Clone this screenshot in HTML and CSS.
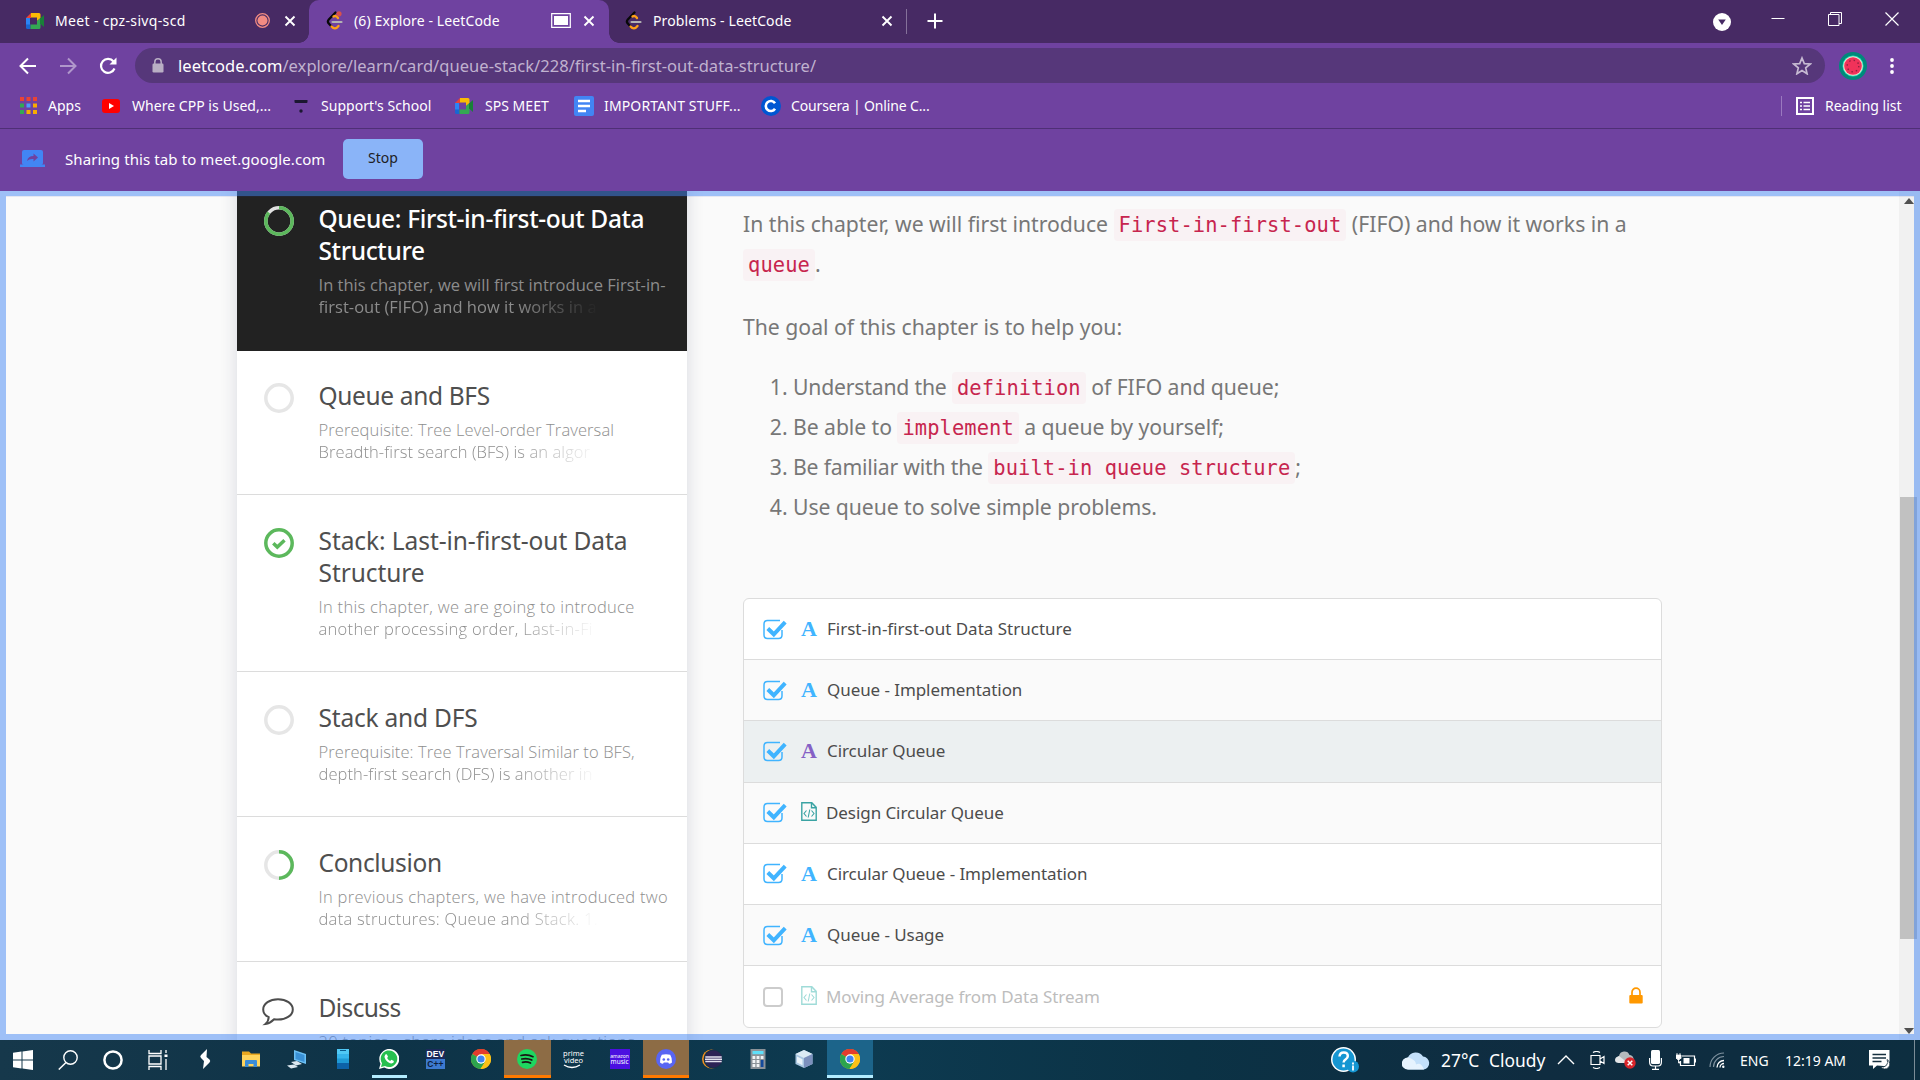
FILE: index.html
```html
<!DOCTYPE html>
<html lang="en">
<head>
<meta charset="utf-8">
<title>Explore - LeetCode</title>
<link rel="stylesheet" href="styles.css">
</head>
<body>
<svg class="defs" width="0" height="0">
  <symbol id="meet" viewBox="0 0 18 16"><path d="M0 5h4v7H0z" fill="#2b84f5"/><path d="M0 5 5 0v5z" fill="#ea4335"/><path d="M5 0h8q1.500 0 1.500 1.500V5l-3.500 3V4.500H5z" fill="#fbbc04"/><path d="M0 11.500h4.500V16H1.500Q0 16 0 14.500z" fill="#1967d2"/><path d="M4.500 11.500H11V8l3.500-3v9.500q0 1.500-1.500 1.500H4.500z" fill="#34a853"/><path d="M14 5.500 18 2v12l-4-3.500z" fill="#188038"/></symbol>
  <symbol id="leet" viewBox="0 0 17 20"><path d="M9.500 1.500 2.800 8.500Q1 10.500 2.800 12.500L5.500 15.500" fill="none" stroke="#080808" stroke-width="2.300" stroke-linecap="round"/><path d="M7.500 5.500q2.500-1.500 4.500 1.500M5.500 15.500q3.500 4 7-0.500" fill="none" stroke="#ffa116" stroke-width="2.300" stroke-linecap="round"/><path d="M6.500 11H15.500" stroke="#b3b3b3" stroke-width="2.200" stroke-linecap="round"/></symbol>
  <symbol id="close" viewBox="0 0 12 12"><path d="M1.500 1.500l9 9M10.500 1.500l-9 9" stroke="#fff" stroke-width="1.900"/></symbol>
  <symbol id="chrome" viewBox="0 0 20 20"><circle cx="10" cy="10" r="10" fill="#fbc116"/><path d="M10 10 1.300 5A10 10 0 0 1 18.700 5z" fill="#e33b2e"/><path d="M10 10 1.300 5A10 10 0 0 0 9.500 20L14.300 12.500z" fill="#2da44e"/><path d="M18.700 5H10v5l4.300 2.500L9.500 20A10 10 0 0 0 18.700 5z" fill="#fbc116"/><circle cx="10" cy="10" r="4.700" fill="#fff"/><circle cx="10" cy="10" r="3.600" fill="#3f83f0"/></symbol>
  <symbol id="check" viewBox="0 0 24 21"><path d="M17 1.500H4.500Q1 1.500 1 5v11q0 3.500 3.500 3.500h11q3.500 0 3.500-3.500v-5" fill="none" stroke="#40b4ff" stroke-width="1.500"/><path d="M4.800 9.500l6 5.800L22.200 3.200" fill="none" stroke="#40b4ff" stroke-width="4"/></symbol>
  <symbol id="code" viewBox="0 0 16 19"><path d="M.8.8h10l4.400 4.600v12.800H.8zM10.500 1v4.700H15" fill="none" stroke="currentColor" stroke-width="1.400"/><path d="M5.500 8.500 3 11.500l2.500 3M10.500 8.500l2.500 3-2.500 3M8.800 7.500l-1.600 8" fill="none" stroke="currentColor" stroke-width="1.100"/></symbol>
</svg>

<header class="browser">
  <div class="tabs">
    <div class="tab tab-first"><svg class="i18"><use href="#meet"/></svg><span class="tab-title">Meet - cpz-sivq-scd</span>
      <svg class="rec" viewBox="0 0 15 15"><circle cx="7.500" cy="7.500" r="6.800" fill="none" stroke="#f28b82" stroke-width="1.300"/><circle cx="7.500" cy="7.500" r="5" fill="#f28b82"/></svg><svg class="x"><use href="#close"/></svg></div>
    <div class="tab tab-active"><svg class="leet" viewBox="0 0 17 20"><use href="#leet"/><circle cx="13" cy="2.800" r="2.600" fill="#d8504c"/></svg><span class="tab-title">(6) Explore - LeetCode</span>
      <svg class="cast" viewBox="0 0 20 15"><path d="M.7.700h18.600v13.600H.7z" fill="none" stroke="#fff" stroke-width="1.200"/><path d="M3 3h14v9H3z" fill="#fff"/></svg><svg class="x"><use href="#close"/></svg></div>
    <div class="tab tab-last"><svg class="leet"><use href="#leet"/></svg><span class="tab-title">Problems - LeetCode</span><svg class="x"><use href="#close"/></svg></div>
    <i class="tab-sep"></i>
    <svg class="plus" viewBox="0 0 16 16"><path d="M8 .5v15M.5 8h15" stroke="#fff" stroke-width="2"/></svg>
    <svg class="window-menu" viewBox="0 0 18 18"><circle cx="9" cy="9" r="9" fill="#fff"/><path d="M5.200 6.500h7.600L9 12z" fill="#472a64"/></svg>
    <div class="window-buttons">
      <svg viewBox="0 0 14 14"><path d="M.5 6.500h13" stroke="#fff" stroke-width="1"/></svg>
      <svg viewBox="0 0 14 14"><path d="M.5 2.500h10.500v11H.5zM2.500 2.500v-2h11v11h-2.500" fill="none" stroke="#fff"/></svg>
      <svg viewBox="0 0 14 14"><path d="M.5.500l13 13M13.500.500l-13 13" stroke="#fff" stroke-width="1.200"/></svg>
    </div>
  </div>

  <div class="toolbar">
    <svg viewBox="0 0 18 18"><path d="M17 9H2M9 1.500 1.500 9 9 16.500" fill="none" stroke="#fff" stroke-width="2"/></svg>
    <svg class="dim" viewBox="0 0 18 18"><path d="M1 9h15M9 1.500 16.500 9 9 16.500" fill="none" stroke="#fff" stroke-width="2"/></svg>
    <svg viewBox="0 0 18 18"><path d="M15.500 11.500A7 7 0 1 1 14.500 4.500" fill="none" stroke="#fff" stroke-width="2.200"/><path d="M17.500.5v7h-7z" fill="#fff"/></svg>
    <div class="omnibox">
      <svg class="padlock" viewBox="0 0 12 15"><path d="M2.800 6V4a3.200 3.200 0 0 1 6.400 0v2" fill="none" stroke="#b9afc4" stroke-width="1.500"/><rect x=".5" y="5.500" width="11" height="9" rx="1.200" fill="#b9afc4"/></svg>
      <span class="url"><b>leetcode.com</b>/explore/learn/card/queue-stack/228/first-in-first-out-data-structure/</span>
      <svg class="star" viewBox="0 0 20 19"><path d="M10 2l2.300 5.600 6 .4-4.600 3.900 1.400 5.900L10 14.600 4.900 17.800l1.400-5.900L1.700 8l6-.4z" fill="none" stroke="#c6bad2" stroke-width="1.700"/></svg>
    </div>
    <svg class="avatar" viewBox="0 0 28 28"><circle cx="14" cy="14" r="14" fill="#00897b"/><circle cx="14" cy="14" r="10.500" fill="#1de9b6"/><circle cx="14" cy="14" r="9.800" fill="#f3d9cf"/><circle cx="14" cy="14" r="8.800" fill="#f0325a"/><circle cx="14" cy="14" r="5.800" fill="none" stroke="#8e1f3f" stroke-width="1.400" stroke-dasharray="1.400 3.150"/></svg>
    <svg class="dots" viewBox="0 0 4 18"><circle cx="2" cy="3" r="1.900" fill="#fff"/><circle cx="2" cy="9" r="1.900" fill="#fff"/><circle cx="2" cy="15" r="1.900" fill="#fff"/></svg>
  </div>

  <nav class="bookmarks">
    <a class="apps"><svg viewBox="0 0 17 17"><g fill="#ea4335"><path d="M0 0h4v4H0zM6.500 0h4v4h-4zM13 0h4v4h-4z"/></g><path d="M0 6.500h4v4H0z" fill="#34a853"/><path d="M6.500 6.500h4v4h-4z" fill="#4c9aff"/><path d="M13 6.500h4v4h-4z" fill="#f9ab00"/><path d="M0 13h4v4H0z" fill="#34a853"/><path d="M6.500 13h4v4h-4zM13 13h4v4h-4z" fill="#f9ab00"/></svg><span>Apps</span></a>
    <a><svg viewBox="0 0 20 20"><rect x="0" y="3" width="18" height="14" rx="3" fill="#f00"/><path d="M7 7l5 3-5 3z" fill="#fff"/></svg><span>Where CPP is Used,...</span></a>
    <a><svg viewBox="0 0 20 20"><path d="M3.500 4h13v2q0 1-1 1h-11q-1 0-1-1z" fill="#1b1731"/><circle cx="10" cy="15" r="1.700" fill="#1b1731"/></svg><span>Support's School</span></a>
    <a><svg viewBox="0 0 20 20"><use href="#meet" width="18" height="16" y="2"/></svg><span>SPS MEET</span></a>
    <a class="docs"><svg viewBox="0 0 20 20"><rect width="20" height="20" rx="2" fill="#4285f4"/><path d="M4 5h12M4 10h12M4 15h8" stroke="#fff" stroke-width="2.400"/></svg><span>IMPORTANT STUFF...</span></a>
    <a class="coursera"><svg viewBox="0 0 20 20"><circle cx="10" cy="10" r="10" fill="#0056d2"/><path d="M14 7.300a5 5 0 1 0 0 5.400" fill="none" stroke="#fff" stroke-width="2.600"/></svg><span>Coursera | Online C...</span></a>
    <a class="reading"><svg viewBox="0 0 18 18"><path d="M1 1h16v16H1z" fill="none" stroke="#fff" stroke-width="2"/><path d="M4 5.500h2M4 9h2M4 12.500h2M7.500 5.500H14M7.500 9H14M7.500 12.500H14" stroke="#fff" stroke-width="1.500"/></svg><span>Reading list</span></a>
  </nav>

  <div class="sharing">
    <svg viewBox="0 0 25 17"><rect x="2" y="0" width="21" height="15" rx="2" fill="#4285f4"/><path d="M0 14.500h25V17H0z" fill="#4285f4"/><path d="M7 11q1-5 6.500-5V3.500L18 7.500l-4.500 4V9Q9.500 8.500 7 11z" fill="#6f42a0"/></svg>
    <span class="sharing-text">Sharing this tab to meet.google.com</span>
    <button>Stop</button>
  </div>
</header>

<main class="viewport">
  <aside class="chapters">
    <section class="chapter current">
      <svg class="ring" viewBox="0 0 30 30"><circle cx="15" cy="15" r="13.200" stroke="#e2e2e2"/><circle cx="15" cy="15" r="13.200" stroke="#5cb85c" pathLength="100" stroke-dasharray="86 100" transform="rotate(-90 15 15)"/></svg>
      <div><h2>Queue: First-in-first-out Data<br>Structure</h2><p>In this chapter, we will first introduce First-in-<br><span class="fade">first-out (FIFO) and how it works in a</span></p></div>
    </section>
    <section class="chapter">
      <svg class="ring" viewBox="0 0 30 30"><circle cx="15" cy="15" r="13.200" stroke="#e6e6e6"/></svg>
      <div><h2>Queue and BFS</h2><p>Prerequisite: Tree Level-order Traversal<br><span class="fade">Breadth-first search (BFS) is an algor</span></p></div>
    </section>
    <section class="chapter">
      <svg class="ring" viewBox="0 0 30 30"><circle cx="15" cy="15" r="13.200" stroke="#5cb85c"/><path d="M9.300 15.300l4 3.800 7.200-6.800" stroke="#5cb85c"/></svg>
      <div><h2>Stack: Last-in-first-out Data<br>Structure</h2><p>In this chapter, we are going to introduce<br><span class="fade">another processing order, Last-in-Fi</span></p></div>
    </section>
    <section class="chapter">
      <svg class="ring" viewBox="0 0 30 30"><circle cx="15" cy="15" r="13.200" stroke="#e6e6e6"/></svg>
      <div><h2>Stack and DFS</h2><p>Prerequisite: Tree Traversal Similar to BFS,<br><span class="fade">depth-first search (DFS) is another in</span></p></div>
    </section>
    <section class="chapter">
      <svg class="ring" viewBox="0 0 30 30"><circle cx="15" cy="15" r="13.200" stroke="#e6e6e6"/><path d="M15 1.800a13.200 13.200 0 0 1 0 26.400" stroke="#5cb85c"/></svg>
      <div><h2>Conclusion</h2><p>In previous chapters, we have introduced two<br><span class="fade">data structures: Queue and Stack. 1.</span></p></div>
    </section>
    <section class="chapter">
      <svg class="bubble" viewBox="0 0 32 28"><path d="M16 1.200c8.300 0 14.800 4.400 14.800 10.200S24.300 21.600 16 21.600q-2 0-3.900-.3Q8 25.500 3.500 26q3-2.500 3.200-6.800Q1.200 16.500 1.200 11.400C1.200 5.600 7.700 1.200 16 1.200z" fill="none" stroke="#4d4d4d" stroke-width="2"/></svg>
      <div><h2>Discuss</h2><p>20 topics - share ideas and ask questions</p></div>
    </section>
  </aside>

  <article class="content">
    <p>In this chapter, we will first introduce <code>First-in-first-out</code> (FIFO) and how it works in a<br><code>queue</code>.</p>
    <p class="goal">The goal of this chapter is to help you:</p>
    <ol>
      <li><span class="tight">Understand the</span> <code>definition</code> of FIFO and queue;</li>
      <li>Be able to <code>implement</code> a queue by yourself;</li>
      <li><span class="tight">Be familiar with the</span> <code>built-in queue structure</code>;</li>
      <li>Use queue to solve simple problems.</li>
    </ol>
    <div class="lessons">
      <div class="lesson"><svg class="tick"><use href="#check"/></svg><b>A</b><span>First-in-first-out Data Structure</span></div>
      <div class="lesson"><svg class="tick"><use href="#check"/></svg><b>A</b><span>Queue - Implementation</span></div>
      <div class="lesson selected"><svg class="tick"><use href="#check"/></svg><b>A</b><span>Circular Queue</span></div>
      <div class="lesson"><svg class="tick"><use href="#check"/></svg><svg class="code"><use href="#code"/></svg><span>Design Circular Queue</span></div>
      <div class="lesson"><svg class="tick"><use href="#check"/></svg><b>A</b><span>Circular Queue - Implementation</span></div>
      <div class="lesson"><svg class="tick"><use href="#check"/></svg><b>A</b><span>Queue - Usage</span></div>
      <div class="lesson locked"><i class="box"></i><svg class="code"><use href="#code"/></svg><span>Moving Average from Data Stream</span>
        <svg class="lock" viewBox="0 0 14 17"><path d="M3 8V5.200a4 4 0 0 1 8 0V8" fill="none" stroke="#ff9800" stroke-width="1.700"/><rect x=".3" y="8" width="13.400" height="8.600" rx="1" fill="#ff9800"/></svg></div>
    </div>
  </article>

  <div class="scrollbar"><svg viewBox="0 0 10 6"><path d="M0 6h10L5 0z" fill="#505050"/></svg><i class="thumb"></i><svg class="down" viewBox="0 0 10 6"><path d="M0 0h10L5 6z" fill="#505050"/></svg></div>
  <div class="share-frame"></div>
</main>

<footer class="taskbar">
  <div class="launchers">
    <span class="sys"><svg viewBox="0 0 20 20"><path d="M0 2.800l8.500-1.200v8H0zM9.500 1.400 20 0v9.600H9.500zM0 10.500h8.500v8L0 17.300zM9.500 10.500H20V20L9.500 18.600z" fill="#fff"/></svg></span>
    <span class="sys"><svg viewBox="0 0 20 20"><circle cx="12.500" cy="7.500" r="6.700" fill="none" stroke="#fff" stroke-width="1.400"/><path d="M8 12.500.8 19.500" stroke="#fff" stroke-width="1.500"/></svg></span>
    <span class="sys"><svg viewBox="0 0 20 20"><circle cx="10" cy="10" r="8.600" fill="none" stroke="#fff" stroke-width="2.500"/></svg></span>
    <span class="sys"><svg viewBox="0 0 20 20"><path d="M1 0v3.500h12V0M1 20v-3.500h12V20M1 6h12v8H1zM18 0v3M18 9v11" fill="none" stroke="#fff" stroke-width="1.300"/><path d="M16.500 4.500h3V7h-3z" fill="#fff"/></svg></span>
    <span class="app first"><svg viewBox="0 0 20 20"><path d="M12 0 6 6q-1.500 1.500 0 3l3 3L8 20l6.500-6.500q1.500-1.500 0-3L11.500 8z" fill="#fff"/></svg></span>
    <span class="app"><svg viewBox="0 0 20 20"><path d="M1 2.500h7l2 2h9V17H1z" fill="#e9a820"/><path d="M1 6h18v11.500H1z" fill="#ffd45c"/><path d="M4 18v-6q0-1 1-1h10q1 0 1 1v6h-3.500v-3h-5v3z" fill="#3b8dd8"/></svg></span>
    <span class="app"><svg viewBox="0 0 20 20"><path d="M7 1l12 4v10L7 11z" fill="#6cc1f5"/><path d="M8.500 3l9 3v7l-9-3z" fill="#3a91d6"/><path d="M4 13l6-1 5 3-6 1.500zM0 16.500l7-1 4 2.500-7 1.500z" fill="#dce8f0"/></svg></span>
    <span class="app"><svg viewBox="0 0 20 20"><path d="M4 0h12v20H4z" fill="#1f9ad6"/><path d="M4 0h12v5H4z" fill="#50c8f5"/><path d="M4 5h12v4.500H4z" fill="#35b4ec"/><path d="M4 14h12v6H4z" fill="#0d62a8"/><path d="M7 1.500h6" stroke="#0a5c8f"/></svg></span>
    <span class="app running"><svg viewBox="0 0 20 20"><path d="M0 20l1.500-5.300A10 10 0 1 1 5.300 18.600z" fill="#fff"/><path d="M2 18l1-3.800A8.300 8.300 0 1 1 6 17z" fill="#27c04f"/><path d="M6.300 5.500l1.500-.3 1.200 2.500-.9 1.300q1 2 3 3l1.300-1.200 2.500 1.200q.2 2-2.400 2.500C8.500 14 5.500 10 5.500 7.500z" fill="#fff"/></svg></span>
    <span class="app"><span class="dev"><em>DEV</em><em>C++</em></span></span>
    <span class="app"><svg><use href="#chrome"/></svg></span>
    <span class="app alert"><svg viewBox="0 0 20 20"><circle cx="10" cy="10" r="10" fill="#1ed760"/><path d="M4 6.500q6.500-1.500 12 1.200M4.800 10q5.500-1.200 10 1M5.500 13.300q4.500-1 8 .8" fill="none" stroke="#191414" stroke-width="1.700" stroke-linecap="round"/></svg></span>
    <span class="app"><span class="prime">prime<br>video<svg viewBox="0 0 18 5"><path d="M1 1q8 5 16 0" fill="none" stroke="#fff" stroke-width="1.300"/></svg></span></span>
    <span class="app"><span class="amazon">amazon<br><em>music</em></span></span>
    <span class="app alert"><svg viewBox="0 0 20 20"><circle cx="10" cy="10" r="10" fill="#5865f2"/><path d="M5.800 5.800Q10 4.500 14.200 5.800 16.300 9 16 13.500q-1.500 1.200-3 1.300l-.8-1.200H7.800L7 14.800q-1.500-.1-3-1.300Q3.700 9 5.800 5.800z" fill="#fff"/><circle cx="7.800" cy="10.500" r="1.300" fill="#5865f2"/><circle cx="12.200" cy="10.500" r="1.300" fill="#5865f2"/></svg></span>
    <span class="app"><svg viewBox="0 0 20 20"><circle cx="9.500" cy="10" r="9.500" fill="#f7941e"/><circle cx="11" cy="10" r="9.500" fill="#173048"/><circle cx="11.500" cy="10" r="8.500" fill="#2c2255"/><path d="M3.300 8h16.400M3 10.300h17M3.300 12.600h16.400" stroke="#e4e2ef" stroke-width="1.500"/></svg></span>
    <span class="app"><svg viewBox="0 0 20 20"><path d="M2.500 0h15v20h-15z" fill="#8b9298"/><path d="M4.500 2h11v3.200h-11z" fill="#5fe0fa"/><path d="M4.500 7h2.800v3H4.500zM8.600 7h2.800v3H8.600zM12.700 7h2.800v3h-2.800zM4.500 11h2.800v3H4.500zM8.600 11h2.800v3H8.600zM4.500 15h2.800v3H4.500zM8.600 15h2.800v3H8.600z" fill="#f2f4f5"/><path d="M12.700 11h2.800v7h-2.800z" fill="#134a9c"/></svg></span>
    <span class="app"><svg viewBox="0 0 20 20"><path d="M10 1l8.500 4v10L10 19l-8.500-4V5z" fill="#a9c7e2"/><path d="M10 1l8.500 4L10 9 1.500 5z" fill="#dcebf5"/><path d="M10 9l8.500-4v10L10 19z" fill="#7c90bd"/><path d="M3 7.500l5.500 2.700v6L3 13.500z" fill="#e8f2f9"/></svg></span>
    <span class="app active"><svg><use href="#chrome"/></svg></span>
  </div>
  <div class="tray">
    <svg class="help" viewBox="0 0 29 26"><circle cx="13.500" cy="12.500" r="12.500" fill="#fff"/><circle cx="13.500" cy="12.500" r="11" fill="#1696d2"/><path d="M9.500 9.500q.3-4 4.300-4t4 3.500q0 2-2 3.200T13.600 15.500M13.600 17.500v2.700" fill="none" stroke="#fff" stroke-width="2.500"/><circle cx="23" cy="19.500" r="6" fill="#1696d2"/><path d="M23 15.500v2M23 18.500v5" stroke="#fff" stroke-width="1.800"/></svg>
    <svg class="cloud" viewBox="0 0 28 20"><path d="M6.500 19.500a6 6 0 0 1-.6-11.900A8.500 8.500 0 0 1 21 6.600a6.500 6.500 0 0 1 .8 12.900z" fill="#c3e0fa"/><path d="M6.500 19.500a6 6 0 1 1 2.500-11q5 2 5 6 5-3 8 5z" fill="#e6f3fe"/></svg>
    <span class="big">27°C</span><span class="big">Cloudy</span>
    <svg class="up" viewBox="0 0 18 10"><path d="M1 9l8-8 8 8" fill="none" stroke="#fff" stroke-width="1.400"/></svg>
    <svg class="cam" viewBox="0 0 15 18"><path d="M1 4.500h9v9H1zM10 8l4-2.500v7L10 10M3 1.500q3.500-2 7 0M3 16.500q3.500 2 7 0" fill="none" stroke="#fff" stroke-width="1.200"/></svg>
    <svg class="drive" viewBox="0 0 21 18"><path d="M4 12a4 4 0 0 1 0-7A5.500 5.500 0 0 1 14.500 4 4.500 4.500 0 0 1 17 12z" fill="#b5babd"/><path d="M0 9q0-3 4-4l9 7H4Q0 12 0 9z" fill="#e4e6e8"/><circle cx="15" cy="12" r="5.700" fill="#d9252b"/><path d="M12.700 9.700l4.600 4.600M17.300 9.700l-4.600 4.600" stroke="#fff" stroke-width="1.500"/></svg>
    <svg class="mic" viewBox="0 0 13 20"><rect x="2" y="0" width="9" height="14" rx="1.500" fill="#fff"/><path d="M.6 8v4q0 4 3.400 4h5q3.400 0 3.400-4V8M6.500 16v3M3 19.300h7" fill="none" stroke="#fff" stroke-width="1.200"/></svg>
    <svg class="battery" viewBox="0 0 20 14"><path d="M6 3h12.500v9.500H4.500V8M19.500 5.500v4" fill="none" stroke="#fff" stroke-width="1.200"/><path d="M7.500 5h6v5.500h-6z" fill="#fff"/><path d="M0 2h5v3.500H4L3 7H2L1 5.500H0zM1 0v2M4 0v2M2.500 7v3h2" fill="#fff" stroke="#fff" stroke-width=".8"/></svg>
    <svg class="wifi" viewBox="0 0 16 16"><path d="M1 15A14 14 0 0 1 15 1M4.500 15A10.500 10.500 0 0 1 15 4.500" fill="none" stroke="#8093a0" stroke-width="1.200"/><path d="M8 15.500A7 7 0 0 1 15 8.500M11 15.500A4 4 0 0 1 15 11.500" fill="none" stroke="#fff" stroke-width="1.300"/><circle cx="14.300" cy="14.800" r="1.200" fill="#fff"/></svg>
    <span>ENG</span><span>12:19 AM</span>
    <svg class="note" viewBox="0 0 21 20"><path d="M0 0h20.500v12q-3 5-6 4L8 15.500 4 19v-3.500H0z" fill="#fff"/><path d="M3.500 4.500h13.500M3.500 8h13.500M3.500 11.500h9" stroke="#17303f" stroke-width="1.300"/><path d="M18 9.500a5 5 0 0 1-6.500 7A5 5 0 1 0 18 9.500z" fill="#fff" stroke="#17303f" stroke-width=".8"/></svg>
    <i class="desktop-edge"></i>
  </div>
</footer>
</body>
</html>
```
FILE: styles.css
```css
* { box-sizing: border-box; }
body { margin: 0; width: 1920px; height: 1080px; overflow: hidden; display: flex; flex-direction: column; background: #fafafa; font-family: "Noto Sans", "Open Sans", sans-serif; font-size: 14px; position: relative; }
svg { display: block; flex: none; }
.defs { position: absolute; }
span, a, h2, p, li, button { white-space: nowrap; }

.browser { height: 191px; flex: none; background: #6f42a0; color: #fff; }
.tabs { height: 43px; display: flex; background: #472a64; }
.tab { display: flex; align-items: center; position: relative; height: 43px; }
.tab-title { margin-right: auto; letter-spacing: .12px; padding-bottom: 1px; }
.tab-first { width: 309px; padding: 0 13px 2px 26px; background: #472a64; }
.tab-first .tab-title { letter-spacing: .34px; }
.tab-active { width: 300px; background: #6f42a0; border-radius: 10px 10px 0 0; padding: 0 14px 2px 17px; }
.tab-active::before, .tab-active::after { content: ""; position: absolute; bottom: 0; width: 10px; height: 10px; }
.tab-active::before { left: -10px; background: radial-gradient(circle at 0 0, transparent 9.500px, #6f42a0 10px); }
.tab-active::after { right: -10px; background: radial-gradient(circle at 100% 0, transparent 9.500px, #6f42a0 10px); }
.tab-last { width: 297px; padding: 0 13px 2px 16px; }
.i18 { width: 18px; height: 16px; margin-right: 11px; }
.leet { width: 17px; height: 20px; margin-right: 11px; }
.x { width: 12px; height: 12px; }
.rec { width: 15px; height: 15px; margin-right: 14px; }
.cast { width: 20px; height: 15px; margin-right: 12px; }
.tab-sep { width: 1px; height: 25px; margin-top: 9px; background: #85719a; }
.plus { width: 16px; height: 16px; margin: 13px 0 0 20px; }
.window-menu { width: 18px; height: 18px; margin: 13px 0 0 770px; }
.window-buttons { display: flex; gap: 43px; margin: 12px 0 0 40px; }
.window-buttons svg { width: 14px; height: 14px; }

.toolbar { height: 45px; display: flex; align-items: center; padding-left: 19px; }
.toolbar > svg { width: 18px; height: 18px; margin-right: 22px; }
.toolbar > svg.dim { opacity: .45; }
.omnibox { width: 1690px; height: 35px; margin-left: -4px; background: #56377a; border-radius: 18px; display: flex; align-items: center; padding: 0 13px 0 17px; font-size: 16.500px; letter-spacing: .04px; color: #c0b2cf; flex: none; }
.padlock { width: 12px; height: 15px; margin-right: 14px; }
.url b { font-weight: 400; color: #fff; }
.star { width: 20px; height: 19px; margin-left: auto; }
.toolbar > svg.avatar { width: 28px; height: 28px; margin: 0 23px 0 14px; }
.toolbar > svg.dots { width: 4px; height: 18px; margin: 0; }

.bookmarks { height: 41px; border-bottom: 1px solid #4f2f76; display: grid; grid-template-columns: 82px 189px 164px 119px 187px 1020px auto; padding: 0 0 5px 20px; letter-spacing: .03px; }
.bookmarks a { display: flex; align-items: center; gap: 10px; }
.bookmarks .docs { letter-spacing: .15px; }
.bookmarks .coursera { letter-spacing: -.15px; }
.bookmarks svg { width: 20px; height: 20px; }
.bookmarks .apps svg { width: 17px; height: 17px; margin-right: 1px; }
.bookmarks .reading { border-left: 1px solid #9a79bf; padding-left: 14px; gap: 11px; height: 20px; align-self: center; letter-spacing: 0; }
.bookmarks .reading svg { width: 18px; height: 18px; }

.sharing { height: 61px; display: flex; align-items: center; padding: 0 0 2px 20px; }
.sharing svg { width: 25px; height: 17px; margin-right: 20px; }
.sharing-text { font-size: 15px; width: 278px; letter-spacing: .1px; }
.sharing button { width: 80px; height: 40px; border: 0; border-radius: 5px; background: #8ab4f8; color: #202124; font: 14px "Noto Sans", sans-serif; padding: 0 0 2px; }

.viewport { height: 849px; flex: none; position: relative; overflow: hidden; display: flex; padding-left: 237px; }
.chapters { width: 450px; height: 1000px; flex: none; margin-top: -17px; background: #fff; box-shadow: 0 0 16px rgba(40, 45, 90, .16); }
.chapter { display: flex; padding: 30px 0 0 26.500px; height: 145px; border-bottom: 1px solid #dcdcdc; }
.chapter:nth-child(1) { height: 177px; padding-top: 29px; border: 0; }
.chapter:nth-child(2) { height: 144px; padding-top: 29px; }
.chapter:nth-child(3) { height: 177px; }
.current { background: #222; }
.ring { width: 30px; height: 30px; margin: 3px 25px 0 0; fill: none; stroke-width: 3.500; }
.bubble { width: 32px; height: 28px; margin: 6px 25px 0 -2px; }
.chapter h2 { margin: 0; font-size: 24.500px; line-height: 32px; font-weight: 400; color: #4f4f4f; letter-spacing: -.35px; }
.chapter p { margin: 7px 0 0; font-family: "Open Sans", "Noto Sans", sans-serif; font-size: 16.500px; line-height: 22px; font-weight: 300; color: #8e8e8e; letter-spacing: .1px; }
.chapter:nth-child(3) h2 { letter-spacing: -.07px; }
.chapter:nth-child(3) p, .chapter:nth-child(n+5) p { letter-spacing: .3px; }
.chapter:nth-child(4) h2 { letter-spacing: -.2px; }
.chapter:nth-child(6) h2 { letter-spacing: -.6px; }
.chapter.current h2 { color: #fff; font-weight: 500; }
.chapter.current p { color: #8c8c8c; font-weight: 400; letter-spacing: .02px; }
.fade { display: inline-block; vertical-align: top; width: 320px; -webkit-mask-image: linear-gradient(90deg, #000 195px, transparent 280px); mask-image: linear-gradient(90deg, #000 195px, transparent 280px); }

.content { margin-left: 56px; width: 919px; padding-top: 13px; font-size: 21.200px; line-height: 40px; color: #777; }
.content p { margin: 0; }
.content .goal { margin-top: 23px; }
.content ol { margin: 20px 0 0; padding-left: 50px; letter-spacing: -.06px; }
.content .tight { letter-spacing: -.2px; }
.content code { font-family: "DejaVu Sans Mono", monospace; font-size: 20.400px; line-height: 20px; letter-spacing: .1px; color: #c7254e; background: #f9f2f4; border-radius: 4px; padding: 4px 5px; }
.lessons { margin-top: 71px; border: 1px solid #dcdcdc; border-radius: 6px; overflow: hidden; background: #fff; font-size: 17px; line-height: 24px; letter-spacing: -.07px; color: #4c4c4c; }
.lesson { height: 61.200px; border-bottom: 1px solid #dcdcdc; display: flex; align-items: center; padding-left: 19px; }
.lesson:first-child { letter-spacing: 0; }
.lesson:nth-child(even) { background: #fafafa; }
.lesson:last-child { border: 0; }
.lesson.selected { background: #ecf0f1; }
.tick { width: 24px; height: 21px; margin-right: 14px; }
.lesson b { width: 26px; font: bold 22px/24px "Liberation Serif", serif; color: #40b4ff; }
.lesson.selected b { color: #8561c5; }
.code { width: 16px; height: 19px; margin: 0 9px 2px 0; color: #3aa3a3; }
.box { width: 20px; height: 20px; border: 2px solid #ccc; border-radius: 4px; margin-right: 18px; }
.locked { color: #bdbdbd; }
.locked .code { color: #9fdbd8; }
.lock { width: 14px; height: 17px; margin: 0 18px 3px auto; }

.scrollbar { margin-left: auto; width: 21px; background: #f1f1f1; display: flex; flex-direction: column; padding: 7px 0 6px 5px; }
.scrollbar svg { width: 10px; height: 6px; }
.thumb { width: 17px; height: 442px; margin: 293px 0 0 -4px; background: #c1c1c1; }
.scrollbar .down { margin-top: auto; }
.share-frame { position: absolute; inset: 0; border: 6px solid rgba(66, 133, 244, .5); border-top-width: 5px; box-shadow: inset 0 1px 0 rgba(50, 70, 180, .1); }

.taskbar { height: 40px; flex: none; background: linear-gradient(90deg, #16384b, #0e3347 20%, #0d3a50 45%, #0b3245 62%, #0f2c40 80%, #0d2e40); color: #fff; display: flex; }
.launchers { display: flex; width: 1330px; }
.sys, .app { width: 45px; height: 40px; display: flex; align-items: center; justify-content: center; flex: none; }
.app { width: 46.070px; padding-bottom: 2px; }
.app.first { margin-left: 2px; }
.launchers span > svg { width: 20px; height: 20px; }
.running { background: linear-gradient(#b3ecff, #b3ecff) 50% 35px / 35px 3px no-repeat; }
.alert { background: linear-gradient(transparent 35px, #ff7a00 35px, #ff7a00 38px, #0c2f42 38px), #8d6c45; }
.active { background: linear-gradient(transparent 35px, #b3ecff 35px, #b3ecff 38px, #0c2f42 38px), #1c648a; }
.dev { width: 19px; height: 20px; background: #234a9e; display: flex; flex-direction: column; }
.dev em { font: bold 8.500px/10px "Liberation Sans", sans-serif; text-align: center; color: #fff; background: #1b2a5a; }
.dev em + em { color: #0e1c38; background: #3c7ad0; }
.prime { font-size: 7.500px; line-height: 7px; text-align: center; }
.launchers .prime svg { width: 18px; height: 5px; }
.amazon { width: 20px; height: 20px; background: #4b0fe0; font-size: 5px; line-height: 6px; text-align: center; padding-top: 4px; }
.amazon em { font-style: normal; font-size: 6.500px; }
.tray { display: grid; grid-template-columns: 72px 39px 48px 68px 33px 25px 34px 27px 33px 31px 45px 84px 45px 6px; align-items: center; }
.help { width: 29px; height: 26px; }
.big { font-size: 17.400px; }
.tray .cloud { width: 28px; height: 20px; }
.up { width: 18px; height: 10px; }
.cam { width: 15px; height: 18px; }
.drive { width: 21px; height: 18px; }
.mic { width: 13px; height: 20px; }
.battery { width: 20px; height: 14px; }
.wifi { width: 16px; height: 16px; }
.note { width: 21px; height: 20px; }
.desktop-edge { width: 1px; height: 40px; background: #7b8c97; }
```
